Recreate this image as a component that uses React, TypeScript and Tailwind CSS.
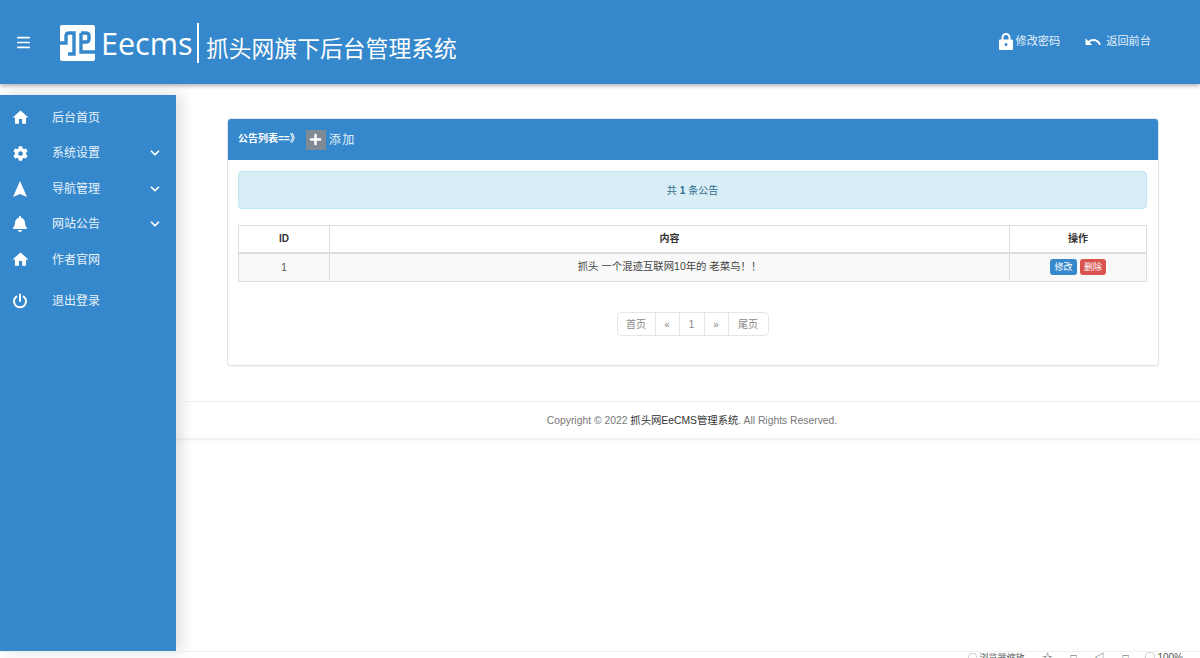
import { Menu, ChevronDown } from "lucide-react"
import { FaCog, FaBell, FaPlus } from "react-icons/fa"
import { MdUndo, MdHome } from "react-icons/md"
import type { ReactNode } from "react"

const font = "font-['Liberation_Sans','Noto_Sans_CJK_SC',sans-serif]"

function Logo() {
  return (
    <svg width="35" height="36" viewBox="0 0 35 36" className="shrink-0">
      <rect width="35" height="36" rx="2" fill="#fff" />
      <g fill="none" stroke="#3588cc" strokeWidth="3.4">
        <path d="M0 18H6V11Q6 8 9 8H14V29H8" />
        <path d="M21 8H26Q29 8 29 11V14Q29 17 26 17H21" />
        <path d="M21 8V27H35" />
      </g>
    </svg>
  )
}

function LockIcon() {
  return (
    <svg width="14" height="17" viewBox="0 0 14 17" className="shrink-0">
      <path d="M3.5 7V4.5a3.5 3.5 0 0 1 7 0V7" fill="none" stroke="#fff" strokeWidth="2" />
      <path fillRule="evenodd" d="M1 6.5H13a1 1 0 0 1 1 1V16a1 1 0 0 1-1 1H1a1 1 0 0 1-1-1V7.5a1 1 0 0 1 1-1ZM7 10a1.5 1.5 0 1 0 0 3 1.5 1.5 0 0 0 0-3Z" fill="#fff" />
    </svg>
  )
}

function NavArrow() {
  return (
    <svg width="14" height="16" viewBox="0 0 14 16">
      <path d="M7 0L14 16L7 13L0 16Z" fill="#fff" />
    </svg>
  )
}

function PowerIcon() {
  return (
    <svg width="16" height="16" viewBox="0 0 16 16" fill="none" stroke="#fff" strokeWidth="2" strokeLinecap="round">
      <path d="M4.5 3.5a6 6 0 1 0 7 0" />
      <path d="M8 1.5V8" />
    </svg>
  )
}

function NavItem({ icon, label, arrow, className }: { icon: ReactNode; label: string; arrow?: boolean; className?: string }) {
  return (
    <div className={`flex items-center h-[35.5px] pl-[12px] pr-[14px] text-white ${className ?? ""}`}>
      <span className="w-[16px] flex justify-center shrink-0">{icon}</span>
      <span className="ml-[24px] text-[12px] flex-1 text-[#e8f2fa]">{label}</span>
      {arrow && <ChevronDown size={14} strokeWidth={3} />}
    </div>
  )
}

export default function App() {
  return (
    <div className={`w-[1200px] h-[658px] overflow-hidden relative bg-white flex flex-col ${font}`}>
      {/* header */}
      <header className="h-[84px] shrink-0 bg-[#3588cc] shadow-[0_2px_4px_rgba(0,0,0,0.3)] flex items-center text-white relative z-10">
        <Menu size={17} strokeWidth={2.4} className="ml-[15px]" />
        <div className="ml-[28px] flex items-center h-[40px] mt-[2px]">
          <Logo />
          <span className="ml-[6px] w-[90px] text-[30.5px] leading-none font-['Open_Sans',sans-serif] whitespace-nowrap">Eecms</span>
          <span className="ml-[6px] w-[2px] h-[40px] bg-white" />
          <span className="ml-[7px] mt-[12px] text-[22.8px] leading-none whitespace-nowrap">抓头网旗下后台管理系统</span>
        </div>
        <div className="ml-auto flex items-center mr-[49px] -mt-[1px] text-[11.2px] text-[#e4f0f9]">
          <LockIcon />
          <span className="ml-[2px]">修改密码</span>
          <MdUndo size={18} className="ml-[24px] text-white" />
          <span className="ml-[4px]">返回前台</span>
        </div>
      </header>

      <div className="flex flex-1 mt-[11px] min-h-0">
        {/* sidebar */}
        <aside className="w-[176px] h-[556px] shrink-0 bg-[#3588cc] shadow-[5px_0_14px_rgba(0,0,0,0.14)] pt-[5px]">
          <NavItem icon={<MdHome size={19} className="shrink-0" />} label="后台首页" />
          <NavItem icon={<FaCog size={15} />} label="系统设置" arrow />
          <NavItem icon={<NavArrow />} label="导航管理" arrow />
          <NavItem icon={<FaBell size={16} />} label="网站公告" arrow />
          <NavItem icon={<MdHome size={19} className="shrink-0" />} label="作者官网" />
          <NavItem icon={<PowerIcon />} label="退出登录" className="mt-[6px]" />
        </aside>

        {/* main */}
        <main className="flex-1 min-w-0">
          <div className="ml-[51px] mr-[41px] mt-[23px] h-[248px] border border-[#e3e3e3] rounded-[4px] bg-white shadow-[0_1px_1px_rgba(0,0,0,0.05)]">
            <div className="h-[41px] bg-[#3588cc] rounded-t-[3px] flex items-center pl-[10px] text-white">
              <span className="text-[10px] font-bold -mt-[3px]">公告列表==》</span>
              <span className="ml-[6px] w-[20px] h-[20px] bg-[#7f8a94] flex items-center justify-center">
                <FaPlus size={13} />
              </span>
              <span className="ml-[3px] text-[12px] tracking-[1.5px] font-['Liberation_Serif','Noto_Sans_CJK_SC',serif] text-[#e2eef8]">添加</span>
            </div>
            <div className="pl-[10px] pr-[11px] pt-[11px]">
              <div className="h-[38px] bg-[#d9edf7] border border-[#bce8f1] rounded-[4px] flex items-center justify-center text-[10px] text-[#31708f]">
                共 <b className="mx-[3px]">1</b> 条公告
              </div>
              <table className="mt-[16px] w-full table-fixed border-collapse text-[10px] text-[#333]">
                <colgroup>
                  <col className="w-[91px]" />
                  <col />
                  <col className="w-[137px]" />
                </colgroup>
                <thead>
                  <tr className="h-[27px]">
                    <th className="border border-[#ddd] border-b-2 font-bold">ID</th>
                    <th className="border border-[#ddd] border-b-2 font-bold">内容</th>
                    <th className="border border-[#ddd] border-b-2 font-bold">操作</th>
                  </tr>
                </thead>
                <tbody>
                  <tr className="h-[29px] bg-[#f9f9f9]">
                    <td className="border border-[#ddd] text-center text-[#555]">1</td>
                    <td className="border border-[#ddd] text-center text-[#444] text-[10.4px]">抓头 一个混迹互联网10年的 老菜鸟！！</td>
                    <td className="border border-[#ddd] text-center">
                      <div className="flex justify-center gap-[3px]">
                        <span className="w-[27px] h-[16px] rounded-[3px] bg-[#3588cc] text-white text-[9px] flex items-center justify-center">修改</span>
                        <span className="w-[26px] h-[16px] rounded-[3px] bg-[#d9534f] text-white text-[9px] flex items-center justify-center">删除</span>
                      </div>
                    </td>
                  </tr>
                </tbody>
              </table>
              <div className="mt-[30px] flex justify-center">
                <div className="flex h-[24px] border border-[#e6e6e6] rounded-[4px] text-[10px] text-[#888] divide-x divide-[#e6e6e6]">
                  <span className="w-[38px] flex items-center justify-center">首页</span>
                  <span className="w-[24px] flex items-center justify-center">«</span>
                  <span className="w-[25px] flex items-center justify-center">1</span>
                  <span className="w-[24px] flex items-center justify-center">»</span>
                  <span className="w-[39px] flex items-center justify-center">尾页</span>
                </div>
              </div>
            </div>
          </div>
          <footer className="mt-[35px] h-[37px] border-t border-[#eee] shadow-[0_2px_2px_rgba(0,0,0,0.06)] flex items-center justify-center pl-[8px] pt-[2px] text-[10.35px] text-[#777]">
            Copyright © 2022&nbsp;<span className="text-[#333]">抓头网EeCMS管理系统</span>. All Rights Reserved.
          </footer>
        </main>
      </div>

      {/* browser status strip, cut by the bottom edge */}
      <div className="h-[7px] shrink-0 overflow-hidden border-t border-[#f0f0f0] flex items-start justify-end pr-[17px] text-[10px] leading-[12px] text-[#555] gap-[18px]">
        <span className="whitespace-nowrap text-[9px]">◯ 浏览器缩放</span>
        <span>☆</span>
        <span>□</span>
        <span>◁</span>
        <span>□</span>
        <span className="whitespace-nowrap -ml-[2px]">◯ 100%</span>
      </div>
    </div>
  )
}
